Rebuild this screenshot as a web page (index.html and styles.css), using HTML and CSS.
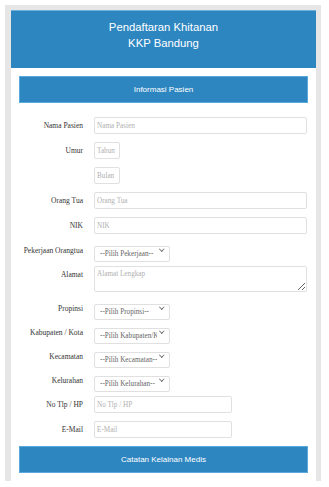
FILE: index.html
```html
<!DOCTYPE html>
<html>
<head>
<meta charset="utf-8">
<link rel="stylesheet" href="styles.css">
</head>
<body>
<div class="frame">
  <div class="card">
    <div class="header">
      <div>Pendaftaran Khitanan</div>
      <div>KKP Bandung</div>
    </div>
    <div class="content">
      <div class="bar">Informasi Pasien</div>
      <form class="form">
        <label class="lbl">Nama Pasien</label>
        <input class="field full" placeholder="Nama Pasien">

        <label class="lbl">Umur</label>
        <input class="field tiny" placeholder="Tahun">

        <span class="lbl"></span>
        <input class="field tiny" placeholder="Bulan">

        <label class="lbl">Orang Tua</label>
        <input class="field full" placeholder="Orang Tua">

        <label class="lbl">NIK</label>
        <input class="field full" placeholder="NIK">

        <label class="lbl">Pekerjaan Orangtua</label>
        <span class="sel"><select><option>--Pilih Pekerjaan--</option></select></span>

        <label class="lbl">Alamat</label>
        <textarea class="field full area" placeholder="Alamat Lengkap"></textarea>

        <label class="lbl">Propinsi</label>
        <span class="sel"><select><option>--Pilih Propinsi--</option></select></span>

        <label class="lbl">Kabupaten / Kota</label>
        <span class="sel"><select><option>--Pilih Kabupaten/Kota--</option></select></span>

        <label class="lbl">Kecamatan</label>
        <span class="sel"><select><option>--Pilih Kecamatan--</option></select></span>

        <label class="lbl">Kelurahan</label>
        <span class="sel"><select><option>--Pilih Kelurahan--</option></select></span>

        <label class="lbl">No Tlp / HP</label>
        <input class="field mid" placeholder="No Tlp / HP">

        <label class="lbl">E-Mail</label>
        <input class="field mid" placeholder="E-Mail">
      </form>
      <div class="bar bar2">Catatan Kelainan Medis</div>
    </div>
  </div>
</div>
</body>
</html>
```

FILE: styles.css
```css
html, body {
  margin: 0;
  padding: 0;
  background: #ffffff;
}
.frame {
  margin: 5px 8px 0 5px;
  height: 476px;
  box-sizing: border-box;
  padding: 5px 5px 0 6px;
  background: #e6e6e6;
  overflow: hidden;
}
.card {
  background: #ffffff;
  height: 100%;
}
.header {
  height: 58px;
  box-sizing: border-box;
  background: #2e86c1;
  border-top: 1px solid #6fb0dc;
  color: #ffffff;
  font-family: "Liberation Sans", Arial, sans-serif;
  font-size: 11.3px;
  line-height: 16px;
  text-align: center;
  padding-top: 8px;
}
.content {
  padding: 8px 8px 0 8px;
}
.bar {
  height: 27px;
  box-sizing: border-box;
  background: #2e86c1;
  border: 1px solid #5aa9dd;
  color: #ffffff;
  font-family: "Liberation Sans", Arial, sans-serif;
  font-size: 8px;
  display: flex;
  align-items: center;
  justify-content: center;
}
.bar2 {
  margin-top: 8px;
}
.form {
  display: grid;
  grid-template-columns: 64px 1fr;
  column-gap: 11px;
  row-gap: 8px;
  margin: 14px 0 0 0;
  align-items: start;
}
.lbl {
  font-family: "Liberation Serif", "Times New Roman", serif;
  font-size: 7.5px;
  line-height: 11px;
  color: #333333;
  text-align: right;
  padding-top: 3px;
  white-space: nowrap;
}
.field {
  box-sizing: border-box;
  height: 17px;
  margin: 0;
  border: 1px solid #e0e0e0;
  border-radius: 2px;
  padding: 0 2px;
  font-family: "Liberation Serif", "Times New Roman", serif;
  font-size: 7.2px;
  color: #555555;
  background: #ffffff;
  outline: none;
}
.field::placeholder {
  color: #b0b0b0;
}
.full {
  width: 213px;
}
.tiny {
  width: 26px;
}
.mid {
  width: 138px;
}
.area {
  height: 26px;
  padding-top: 3px;
  resize: vertical;
  display: block;
}
.sel {
  position: relative;
  display: block;
  width: 76px;
  height: 16px;
}
.sel select {
  appearance: none;
  -webkit-appearance: none;
  box-sizing: border-box;
  width: 76px;
  height: 16px;
  margin: 0;
  border: 1px solid #e0e0e0;
  border-radius: 2px;
  background: #ffffff;
  padding: 0 12px 0 5px;
  font-family: "Liberation Serif", "Times New Roman", serif;
  font-size: 7.2px;
  color: #666666;
  outline: none;
}
.sel::after {
  content: "";
  position: absolute;
  right: 7px;
  top: 5px;
  width: 2.5px;
  height: 2.5px;
  border-right: 1px solid #777777;
  border-bottom: 1px solid #777777;
  transform: rotate(45deg);
}
```
